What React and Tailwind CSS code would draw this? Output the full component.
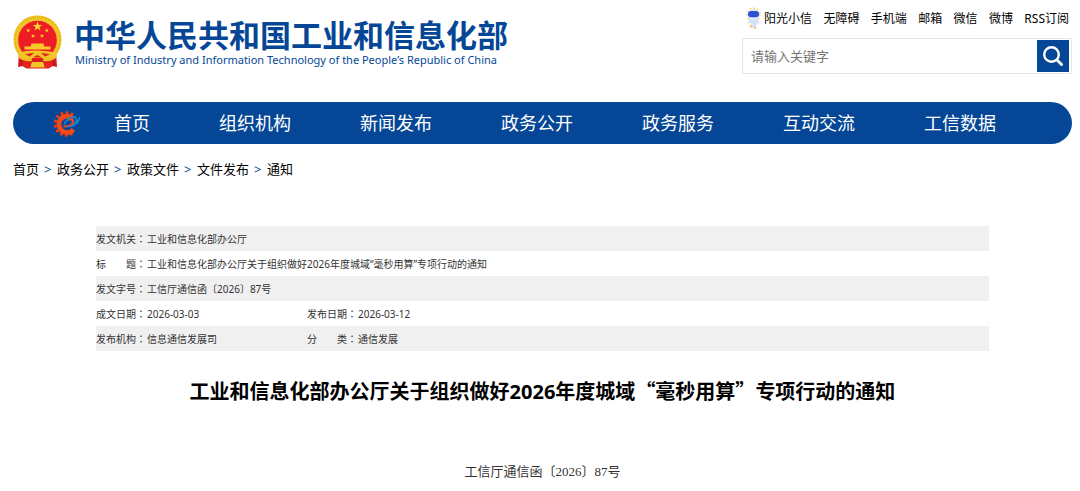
import React, { useState } from "react";

const topLinks = ["无障碍", "手机端", "邮箱", "微信", "微博", "RSS订阅"];

const navItems = [
	"首页",
	"组织机构",
	"新闻发布",
	"政务公开",
	"政务服务",
	"互动交流",
	"工信数据",
];

const crumbs = ["首页", "政务公开", "政策文件", "文件发布", "通知"];

const infoRows = [
	[["发文机关", "工业和信息化部办公厅"]],
	[["标题", "工业和信息化部办公厅关于组织做好2026年度城域“毫秒用算”专项行动的通知"]],
	[["发文字号", "工信厅通信函〔2026〕87号"]],
	[["成文日期", "2026-03-03"], ["发布日期", "2026-03-12"]],
	[["发布机构", "信息通信发展司"], ["分类", "通信发展"]],
];

const STAR = "M0-5 1.2-1.6 4.8-1.6 1.9.6 2.9 4 0 1.9-2.9 4-1.9.6-4.8-1.6-1.2-1.6Z";

const Emblem = () => (
	<svg viewBox="0 0 49 54" className="w-[49px] h-[54px] shrink-0" aria-hidden="true">
		<path d="M6 37 5 52l4.500-1 4 2.500h22l4-2.500 4.500 1L43 37Z" fill="#d8191f" />
		<path d="M9 42v9M40 42v9" stroke="#a80e14" strokeWidth="1.500" />
		<path d="M24.500.5C11 .5.500 11 .5 25q0 9 5.500 15h37q5.500-6 5.500-15C48.500 11 38 .5 24.500.5Z" fill="#f2c526" />
		<path d="M5.500 37Q2 31.500 2 25 2.500 3 24.500 2 46.500 3 47 25q0 6.500-3.500 12" fill="none" stroke="#dfac1a" strokeWidth="1" strokeDasharray="2.500 1.500" />
		<circle cx="24.500" cy="25" r="19.300" fill="#ee1c25" />
		<path d={STAR} transform="translate(24.500 11.500)" fill="#fbd92e" />
		<path d={STAR} transform="translate(15.200 15.500) scale(.45)" fill="#fbd92e" />
		<path d={STAR} transform="translate(33.800 15.500) scale(.45)" fill="#fbd92e" />
		<path d={STAR} transform="translate(20 21) scale(.45)" fill="#fbd92e" />
		<path d={STAR} transform="translate(29 21) scale(.45)" fill="#fbd92e" />
		<path d="M18.500 28.500h12l.8 3h6.200v3H11.500v-3h6.200Z" fill="#f7c92b" />
		<path d="M6 37.500q8-2.500 18.500-2T43 37.500l1 3.500q-5 4-12 4l-3-2h-9l-3 2Q9 45 5 41Z" fill="#f2c526" />
		<path d="M12 39.500q5-2 9-1.500l-4 3.500ZM37 39.500q-5-2-9-1.500l4 3.500ZM20 42.500l4.500-2.500 4.500 2.500Z" fill="#e0261f" />
		<path d="m17 52.500 1.500-5.500h12l1.500 5.500Z" fill="#f2c526" />
		<path d="M9 45.500q5 2 10 1l-2 6.500h-4l-4-2.500ZM40 45.500q-5 2-10 1l2 6.500h4l4-2.500Z" fill="#e5231f" />
		<path d="M6 42q6 5 13 3M43 42q-6 5-13 3" stroke="#f2c526" strokeWidth="1.500" fill="none" />
	</svg>
);

const Mascot = () => (
	<svg viewBox="0 0 15 24" className="w-[15px] h-6 shrink-0" aria-hidden="true">
		<circle cx="7.500" cy="7.500" r="6.300" fill="none" stroke="#f8cf5c" strokeWidth="1.600" strokeDasharray="1.600 2" />
		<path d="M3 12q4.500-2 9 0l1.500 5-2.500-1-1 5H6l-1-5-3 1Z" fill="#d6e3f4" />
		<ellipse cx="7.500" cy="7.500" rx="6" ry="5.200" fill="#dfe9fb" />
		<rect x="2" y="4" width="11" height="6.200" rx="3" fill="#2d50d6" />
		<path d="M5 18v2.500M9 20v2" stroke="#f5bd45" strokeWidth="1.600" />
	</svg>
);

const GearLogo = () => (
	<svg viewBox="0 0 28 28" className="w-7 h-7 shrink-0" aria-hidden="true">
		<path d="M20 6A11.200 11.200 0 1 0 20.500 23.500" fill="none" stroke="#f03a10" strokeWidth="3" strokeDasharray="2.800 2.300" />
		<path d="M20 9.500A8.200 8.200 0 1 0 20.500 20.500" fill="none" stroke="#f5481a" strokeWidth="4.600" />
		<path d="M10.500 17.500q7 0 9-3 1.500-2.500-.5-4-2-1-4.500.5" fill="none" stroke="#f5481a" strokeWidth="2.200" />
		<path d="M27 6.500q1 5.500-4.500 9.500-4.500 3-10 2 6.500-1 9.500-4.500 1.500-3-.5-5 3 .5 2.500 3 2-2 3-5Z" fill="#1486d6" />
		<path d="M11 15.500Q13.500 9.500 19.500 8q2.500-.5 3.500 1" fill="none" stroke="#1486d6" strokeWidth="1.600" />
	</svg>
);

const Label = ({ text }) => (
	<span className="flex">
		<span className="flex w-10 justify-between">
			{text.length === 2 ? text.split("").map((c) => <span key={c}>{c}</span>) : text}
		</span>
		<span lang="zh-TW" className="font-['Noto_Sans_CJK_TC',sans-serif]">：</span>
	</span>
);

const App = () => {
	const [keyword, setKeyword] = useState("");

	return (
		<div
			lang="zh-CN"
			className="pl-[13px] pr-2 pb-2 bg-white text-black font-['Noto_Sans','Noto_Sans_CJK_SC',sans-serif]"
		>
			<header className="flex justify-between pt-[7px]">
				<a href="#home" className="flex gap-3 pt-2">
					<Emblem />
					<span className="flex flex-col pt-px text-[#054796] whitespace-nowrap">
						<span className="text-[31px] leading-9 font-bold font-['Noto_Sans_CJK_SC',sans-serif]">
							中华人民共和国工业和信息化部
						</span>
						<span className="pl-px text-[11px] leading-4">
							Ministry of Industry and Information Technology of the People’s Republic of China
						</span>
					</span>
				</a>
				<div className="w-[330px]">
					<div className="flex items-center justify-between pl-1 pr-[3px] h-6 text-[12px] leading-4 whitespace-nowrap">
						<a href="#xiaoxin" className="flex items-center gap-[3px]">
							<Mascot />
							阳光小信
						</a>
						{topLinks.map((item) => (
							<a key={item} href="#top">
								{item}
							</a>
						))}
					</div>
					<form
						onSubmit={(e) => e.preventDefault()}
						className="flex items-center mt-[7px] h-9 pr-[2px] border border-[#e6e6e6]"
					>
						<input
							type="text"
							aria-label="请输入关键字"
							placeholder="请输入关键字"
							value={keyword}
							onChange={(e) => setKeyword(e.target.value)}
							className="flex-1 min-w-0 px-2 text-[13px] leading-5 outline-none placeholder:text-[#757575]"
						/>
						<button
							type="submit"
							aria-label="搜索"
							className="flex items-center justify-center w-8 h-8 bg-[#054796]"
						>
							<svg viewBox="0 0 20 20" className="w-5 h-5" fill="none" stroke="#fff" strokeWidth="2.400">
								<circle cx="8.500" cy="8.500" r="7.300" />
								<path d="m13.500 13.500 6 6" strokeWidth="2.800" />
							</svg>
						</button>
					</form>
				</div>
			</header>

			<nav className="flex items-center mt-7 h-[42px] pl-10 pr-[76px] rounded-full bg-[#054796] text-white">
				<GearLogo />
				<ul className="flex flex-1 justify-between pl-[33px] text-[18px] leading-6 whitespace-nowrap">
					{navItems.map((item) => (
						<li key={item}>
							<a href="#nav">{item}</a>
						</li>
					))}
				</ul>
			</nav>

			<div className="flex gap-[5px] mt-[15px] text-[13px] leading-5">
				{crumbs.map((item, i) => (
					<React.Fragment key={item}>
						{i > 0 && <span className="w-2 text-[#054796]">&gt;</span>}
						<a href="#crumb">{item}</a>
					</React.Fragment>
				))}
			</div>

			<main className="px-[83px] mt-[47px]">
				<table className="w-full table-fixed text-left text-[10px] leading-4 text-[#333]">
					<colgroup>
						<col className="w-[51px]" />
						<col className="w-40" />
						<col className="w-[51px]" />
						<col />
					</colgroup>
					<tbody>
						{infoRows.map((row, i) => (
							<tr key={i} className="h-[25px] odd:bg-[#f0f0f0]">
								{row.map(([label, value]) => (
									<React.Fragment key={label}>
										<th scope="row" className="p-0 font-normal">
											<Label text={label} />
										</th>
										<td className="p-0" colSpan={row.length === 1 ? 3 : 1}>
											{value}
										</td>
									</React.Fragment>
								))}
							</tr>
						))}
					</tbody>
				</table>
				<h1 className="mt-6 text-center text-[20px] leading-8 font-bold">
					工业和信息化部办公厅关于组织做好2026年度城域
					<span className="font-['Noto_Sans_CJK_SC',sans-serif]">“毫秒用算”</span>
					专项行动的通知
				</h1>
				<p className="mt-[54px] text-center text-[13px] leading-5 text-[#333] font-['Liberation_Serif','Noto_Sans_CJK_SC',serif]">
					工信厅通信函〔2026〕87号
				</p>
			</main>
		</div>
	);
};

export default App;
